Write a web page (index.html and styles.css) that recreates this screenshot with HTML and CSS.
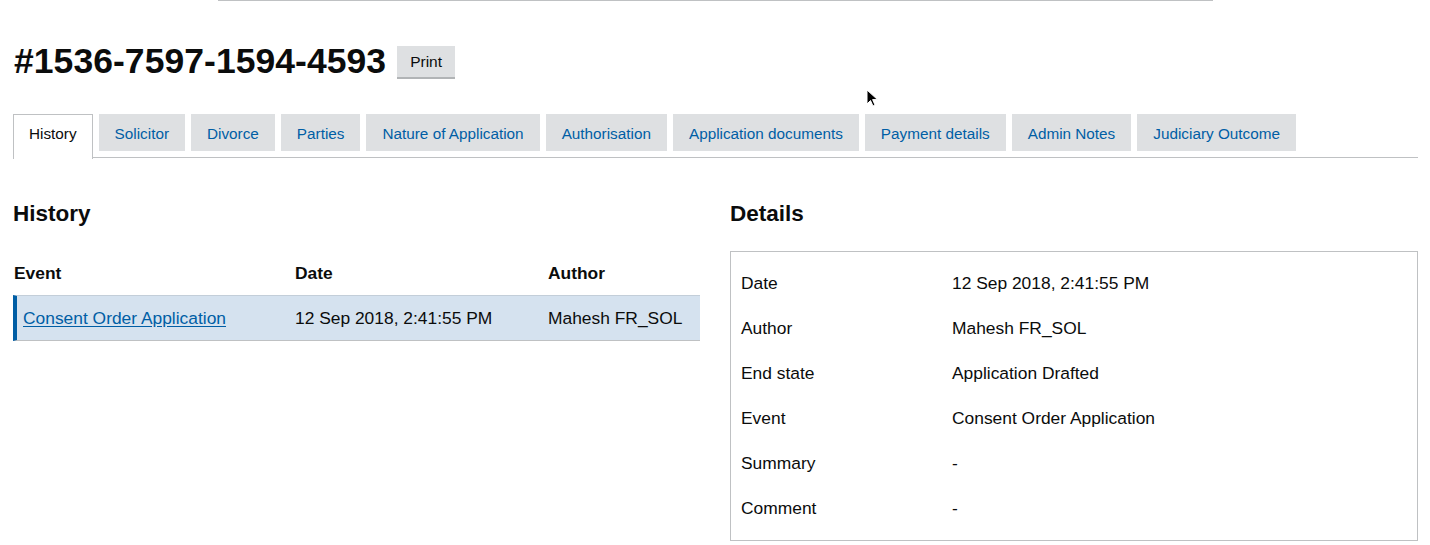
FILE: index.html
```html
<!DOCTYPE html>
<html lang="en">
<head>
<meta charset="utf-8">
<title>Case #1536-7597-1594-4593</title>
<link rel="stylesheet" href="styles.css">
</head>
<body>
<div class="top-rule"></div>
<main class="page">
  <div class="case-header">
    <h1 class="case-title">#1536-7597-1594-4593</h1>
    <button class="print-btn" type="button">Print</button>
  </div>

  <nav class="tabs">
    <a class="tab tab-active" href="#">History</a>
    <a class="tab" href="#">Solicitor</a>
    <a class="tab" href="#">Divorce</a>
    <a class="tab" href="#">Parties</a>
    <a class="tab" href="#">Nature of Application</a>
    <a class="tab" href="#">Authorisation</a>
    <a class="tab" href="#">Application documents</a>
    <a class="tab" href="#">Payment details</a>
    <a class="tab" href="#">Admin Notes</a>
    <a class="tab" href="#">Judiciary Outcome</a>
  </nav>

  <div class="columns">
    <section class="history">
      <h2 class="section-title">History</h2>
      <div class="history-table">
        <div class="history-head">
          <div class="cell">Event</div>
          <div class="cell">Date</div>
          <div class="cell">Author</div>
        </div>
        <div class="history-row">
          <div class="cell"><a class="event-link" href="#">Consent Order Application</a></div>
          <div class="cell">12 Sep 2018, 2:41:55 PM</div>
          <div class="cell">Mahesh FR_SOL</div>
        </div>
      </div>
    </section>

    <section class="details">
      <h2 class="section-title">Details</h2>
      <dl class="details-box">
        <div class="detail-row"><dt>Date</dt><dd>12 Sep 2018, 2:41:55 PM</dd></div>
        <div class="detail-row"><dt>Author</dt><dd>Mahesh FR_SOL</dd></div>
        <div class="detail-row"><dt>End state</dt><dd>Application Drafted</dd></div>
        <div class="detail-row"><dt>Event</dt><dd>Consent Order Application</dd></div>
        <div class="detail-row"><dt>Summary</dt><dd>-</dd></div>
        <div class="detail-row"><dt>Comment</dt><dd>-</dd></div>
      </dl>
    </section>
  </div>
</main>
<svg class="cursor" width="14" height="20" viewBox="0 0 14 20" aria-hidden="true">
  <path d="M1 1 L1 15 L4.5 11.5 L7 17 L9 16 L6.6 10.6 L11.5 10.6 Z" fill="#000" stroke="#fff" stroke-width="1"/>
</svg>
</body>
</html>
```

FILE: styles.css
```css
* { box-sizing: border-box; }

html, body {
  margin: 0;
  padding: 0;
  background: #fff;
}

body {
  font-family: "Liberation Sans", Arial, sans-serif;
  color: #0b0c0c;
  position: relative;
  min-height: 545px;
}

.top-rule {
  margin: 0 217px 0 218px;
  height: 1px;
  background: #bfc1c3;
}

.page {
  padding: 0 12px 0 13px;
}

.case-header {
  display: flex;
  align-items: center;
  margin-top: 39px;
  height: 42px;
}

.case-title {
  margin: 0 0 0 1px;
  font-size: 35.5px;
  line-height: 42px;
  font-weight: 700;
  letter-spacing: 0.05px;
}

.print-btn {
  margin-left: 11px;
  margin-top: 2px;
  height: 33px;
  width: 58px;
  padding: 0;
  border: 0;
  border-bottom: 2px solid #b1b4b6;
  background: #dee0e2;
  font-family: "Liberation Sans", Arial, sans-serif;
  font-size: 15.5px;
  color: #0b0c0c;
  line-height: 31px;
}

.tabs {
  display: flex;
  gap: 6px;
  margin-top: 32px;
  border-bottom: 1px solid #bfc1c3;
  height: 44px;
  align-items: flex-start;
}

.tab {
  display: block;
  height: 37px;
  padding: 9px 16px 0;
  font-size: 15.3px;
  line-height: 21px;
  background: #dee0e2;
  color: #005ea5;
  text-decoration: none;
  white-space: nowrap;
}

.tab-active {
  height: 45px;
  padding: 8px 15px 0;
  background: #fff;
  color: #0b0c0c;
  border: 1px solid #bfc1c3;
  border-bottom: 0;
  margin-bottom: -1px;
}

.columns {
  display: grid;
  grid-template-columns: 687px 1fr;
  gap: 30px;
  margin-top: 42px;
}

.section-title {
  margin: 0;
  font-size: 22.5px;
  line-height: 28px;
  font-weight: 700;
}

.history-table {
  margin-top: 33px;
  font-size: 17.4px;
  line-height: 24px;
}

.history-head {
  display: grid;
  grid-template-columns: 281px 253px 1fr;
  font-weight: 700;
  padding: 0 0 10px 1px;
}

.history-row {
  display: grid;
  grid-template-columns: 278px 253px 1fr;
  background: #d5e2ef;
  border-top: 1px solid #c3ced9;
  border-bottom: 1px solid #bfc1c3;
  border-left: 4px solid #005ea5;
  padding: 10px 0 10px;
}

.history-row .cell:first-child {
  padding-left: 6px;
}

.event-link {
  color: #005ea5;
  text-decoration: underline;
  text-underline-offset: 2px;
}

.details-box {
  margin: 23px 0 0;
  border: 1px solid #bfc1c3;
  padding: 8.5px 10px 9.5px;
  font-size: 17.4px;
  line-height: 24px;
}

.detail-row {
  display: grid;
  grid-template-columns: 211px 1fr;
  height: 45px;
  align-items: center;
}

.detail-row dt,
.detail-row dd {
  margin: 0;
}

.cursor {
  position: absolute;
  left: 866px;
  top: 89px;
}
```
